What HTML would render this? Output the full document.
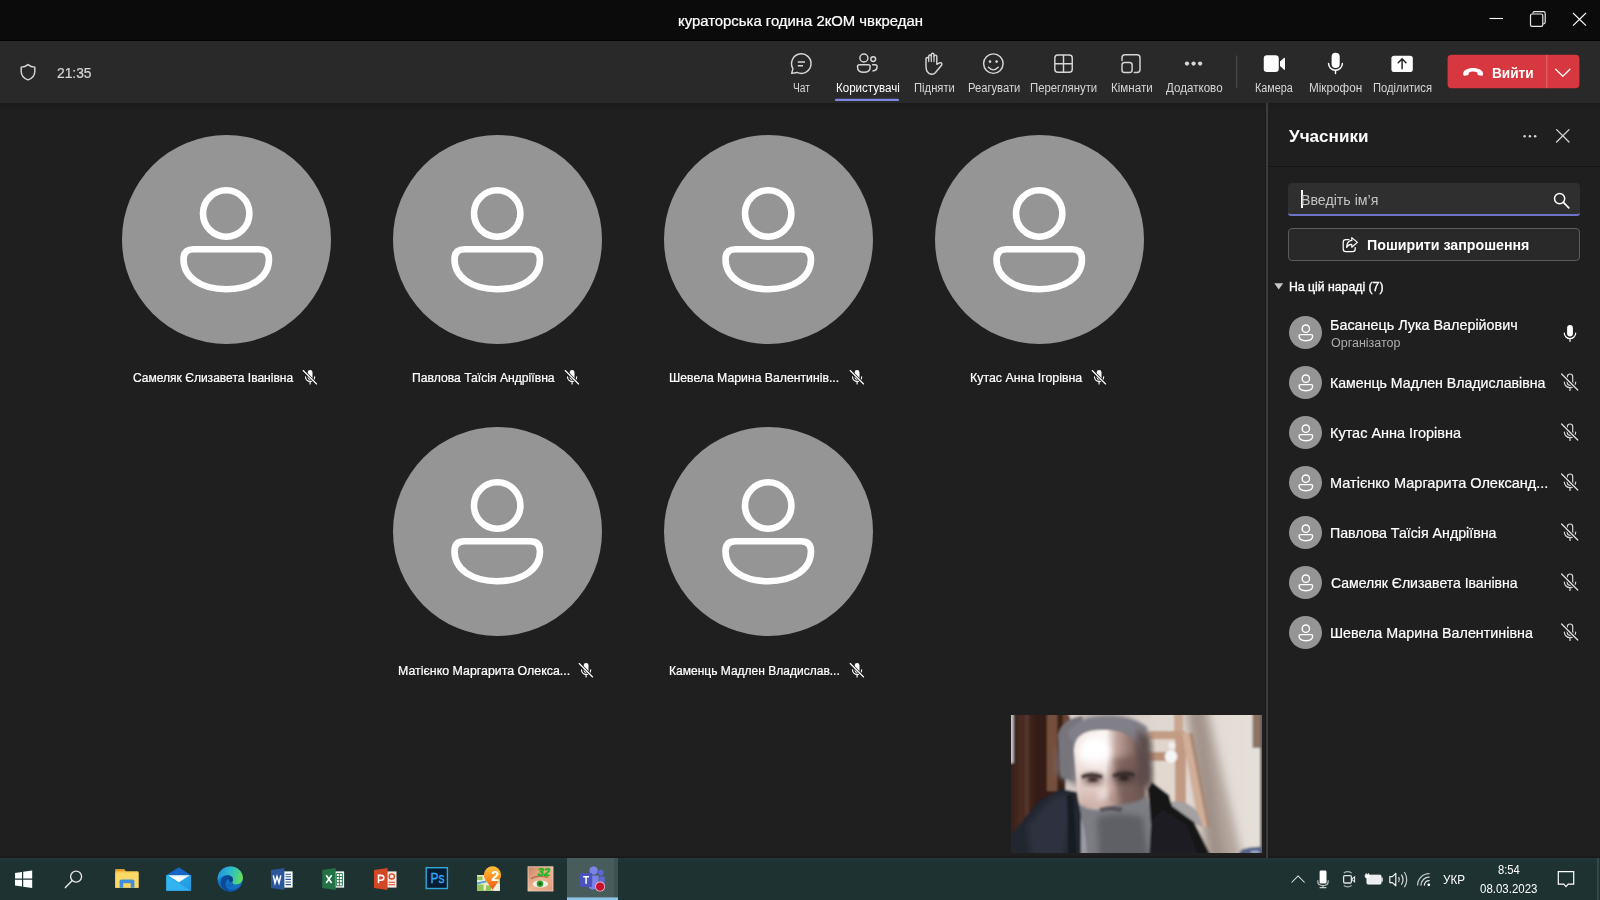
<!DOCTYPE html>
<html lang="uk">
<head>
<meta charset="utf-8">
<title>Teams</title>
<style>
html,body{margin:0;padding:0;}
html{width:1600px;height:900px;overflow:hidden;background:#1f1f1f;}
body{width:1600px;height:900px;overflow:hidden;position:relative;background:#1f1f1f;font-family:"Liberation Sans",sans-serif;color:#fff;}
.abs{position:absolute;}
.t{position:absolute;white-space:nowrap;transform-origin:0 0;}
svg{position:absolute;overflow:visible;}
#titlebar{left:0;top:0;width:1600px;height:41px;background:#0b0b0b;}
#toolbar{left:0;top:41px;width:1600px;height:62px;background:#292929;}
#main{left:0;top:103px;width:1266px;height:755px;background:#1f1f1f;}
#panel{left:1266px;top:103px;width:334px;height:755px;background:#1f1f1f;}
#taskbar{left:0;top:858px;width:1600px;height:42px;background:#1e3232;}
.av{position:absolute;width:209px;height:209px;border-radius:50%;background:#959595;}
.sav{position:absolute;width:33.8px;height:33.8px;border-radius:50%;background:#959595;}
</style>
</head>
<body>
<div class="abs" id="titlebar"></div>
<div class="abs" id="toolbar"></div>
<div class="abs" id="main"></div>
<div class="abs" id="panel"></div>
<div class="abs" style="left:1264.8px;top:103px;width:1px;height:755px;background:#191919"></div>
<div class="abs" style="left:1265.8px;top:103px;width:1.9px;height:755px;background:#3c3c3c"></div>
<div class="abs" id="taskbar"></div>
<div class="abs" style="left:0;top:40px;width:1600px;height:1px;background:#020202"></div>
<div class="abs" style="left:0;top:103px;width:1266px;height:7px;background:linear-gradient(#1a1a1a,#1f1f1f)"></div>
<div class="abs" style="left:1268px;top:103px;width:332px;height:5px;background:linear-gradient(#1b1b1b,#1f1f1f)"></div>
<div class="abs" style="left:0;top:855px;width:1264.8px;height:3px;background:linear-gradient(#1f1f1f,#181818)"></div>
<div class="abs" style="left:1267.7px;top:855px;width:333px;height:3px;background:linear-gradient(#1f1f1f,#181818)"></div>
<div class="abs" style="left:0;top:858px;width:1600px;height:5px;background:linear-gradient(#1e3739,#1e3232)"></div>
<svg width="0" height="0" style="left:0;top:0">
<defs>
<symbol id="person" viewBox="0 0 209 209">
  <circle cx="104.2" cy="78.5" r="23.2" fill="none" stroke="#fff" stroke-width="6.6"/>
  <path d="M71.5 114.3 H137 Q147 114.3 147 124.3 C147 142 130 154.2 104.2 154.2 C78.5 154.2 61.5 142 61.5 124.3 Q61.5 114.3 71.5 114.3 Z" fill="none" stroke="#fff" stroke-width="6.6" stroke-linejoin="round"/>
</symbol>
<symbol id="personS" viewBox="0 0 209 209">
  <circle cx="104.2" cy="78.5" r="22.6" fill="none" stroke="#fff" stroke-width="8.6"/>
  <path d="M71.5 115 H137 Q146.4 115 146.4 124.3 C146.4 142 130 153.4 104.2 153.4 C78.5 153.4 62 142 62 124.3 Q62 115 71.5 115 Z" fill="none" stroke="#fff" stroke-width="8.6" stroke-linejoin="round"/>
</symbol>
<symbol id="micoffF" viewBox="0 0 16 16">
  <rect x="5.7" y="1" width="4.8" height="10" rx="2.4" fill="#fff"/>
  <path d="M3.5 7.8 a4.6 4.6 0 0 0 9.2 0" fill="none" stroke="#fff" stroke-width="1.15" stroke-linecap="round"/>
  <path d="M8.1 12.6 V15" stroke="#fff" stroke-width="1.15" stroke-linecap="round"/>
  <path d="M1.2 1.5 L14.6 15" stroke="#1f1f1f" stroke-width="2.5"/>
  <path d="M1.2 1.5 L14.6 15" stroke="#fff" stroke-width="1.15" stroke-linecap="round"/>
</symbol>
<symbol id="micoffO" viewBox="0 0 20 20">
  <rect x="7.3" y="2" width="5.4" height="11.3" rx="2.7" fill="none" stroke="#d6d6d6" stroke-width="1.2"/>
  <path d="M4.3 10 a5.7 5.7 0 0 0 11.4 0" fill="none" stroke="#d6d6d6" stroke-width="1.2" stroke-linecap="round"/>
  <path d="M10 15.8 V18.4" stroke="#d6d6d6" stroke-width="1.2" stroke-linecap="round"/>
  <path d="M1.6 2 L17.8 18" stroke="#1f1f1f" stroke-width="3.2"/>
  <path d="M1.6 2 L17.8 18" stroke="#e6e6e6" stroke-width="1.2" stroke-linecap="round"/>
</symbol>
<symbol id="micF" viewBox="0 0 20 20">
  <rect x="7.1" y="2" width="5.8" height="11.4" rx="2.9" fill="#fff"/>
  <path d="M4.3 10 a5.7 5.7 0 0 0 11.4 0" fill="none" stroke="#fff" stroke-width="1.2" stroke-linecap="round"/>
  <path d="M10 15.8 V18.3" stroke="#fff" stroke-width="1.2" stroke-linecap="round"/>
</symbol>
</defs></svg>
<div class="av" style="left:122.0px;top:135.3px"></div><svg style="left:122.0px;top:135.3px" width="209" height="209"><use href="#person"/></svg>
<div class="av" style="left:393.0px;top:135.3px"></div><svg style="left:393.0px;top:135.3px" width="209" height="209"><use href="#person"/></svg>
<div class="av" style="left:664.0px;top:135.3px"></div><svg style="left:664.0px;top:135.3px" width="209" height="209"><use href="#person"/></svg>
<div class="av" style="left:935.0px;top:135.3px"></div><svg style="left:935.0px;top:135.3px" width="209" height="209"><use href="#person"/></svg>
<div class="av" style="left:393.0px;top:427.3px"></div><svg style="left:393.0px;top:427.3px" width="209" height="209"><use href="#person"/></svg>
<div class="av" style="left:664.0px;top:427.3px"></div><svg style="left:664.0px;top:427.3px" width="209" height="209"><use href="#person"/></svg>
<svg style="left:302.1px;top:368.8px" width="16" height="16"><use href="#micoffF"/></svg>
<svg style="left:564.1px;top:368.8px" width="16" height="16"><use href="#micoffF"/></svg>
<svg style="left:849.1px;top:368.8px" width="16" height="16"><use href="#micoffF"/></svg>
<svg style="left:1091.0px;top:368.8px" width="16" height="16"><use href="#micoffF"/></svg>
<svg style="left:578.3px;top:661.5px" width="16" height="16"><use href="#micoffF"/></svg>
<svg style="left:848.8px;top:661.5px" width="16" height="16"><use href="#micoffF"/></svg>
<div class="abs" style="left:1268px;top:166px;width:332px;height:1px;background:#141414"></div>
<svg style="left:1522px;top:128px" width="16" height="16"><circle cx="2.6" cy="8.2" r="1.25" fill="#d6d6d6"/><circle cx="7.9" cy="8.2" r="1.25" fill="#d6d6d6"/><circle cx="13.2" cy="8.2" r="1.25" fill="#d6d6d6"/></svg>
<svg style="left:1556px;top:129px" width="14" height="14"><path d="M0.6 0.6 L13 13 M13 0.6 L0.6 13" stroke="#d6d6d6" stroke-width="1.3" stroke-linecap="round"/></svg>
<div class="abs" style="left:1288px;top:183px;width:292px;height:33px;background:#2f2f2f;border-radius:4px 4px 3px 3px;box-sizing:border-box;border-bottom:2px solid #6f74c9;"></div>
<div class="abs" style="left:1300.6px;top:189.6px;width:2.2px;height:18.4px;background:#fff"></div>
<svg style="left:1553px;top:192px" width="17" height="17"><circle cx="6.6" cy="6.6" r="5.1" fill="none" stroke="#fff" stroke-width="1.5"/><path d="M10.4 10.4 L15.8 15.8" stroke="#fff" stroke-width="1.7" stroke-linecap="round"/></svg>
<div class="abs" style="left:1288px;top:228px;width:292px;height:33px;background:#292929;border:1px solid #5c5c5c;border-radius:4px;box-sizing:border-box;"></div>
<svg style="left:1341px;top:236px" width="18" height="18" viewBox="0 0 18 18"><path d="M8 3.6 H4.8 A2.6 2.6 0 0 0 2.2 6.2 V13 A2.6 2.6 0 0 0 4.8 15.6 H11.6 A2.6 2.6 0 0 0 14.2 13 V11.6" fill="none" stroke="#fff" stroke-width="1.25" stroke-linecap="round"/><path d="M10.8 1.6 L16.4 6.4 L10.8 11.2 V8.5 C8 8.4 6.6 9.6 5.6 11.4 C5.7 7.6 7.6 4.8 10.8 4.4 Z" fill="none" stroke="#fff" stroke-width="1.25" stroke-linejoin="round"/></svg>
<svg style="left:1273.5px;top:283px" width="10" height="7"><path d="M0.3 0.3 H9.2 L4.75 6.4 Z" fill="#c8c8c8"/></svg>
<div class="sav" style="left:1288.7px;top:315.7px"></div><svg style="left:1288.7px;top:315.7px" width="33.8" height="33.8"><use href="#personS"/></svg>
<svg style="left:1560.0px;top:322.5px" width="20" height="20"><use href="#micF"/></svg>
<div class="sav" style="left:1288.7px;top:365.7px"></div><svg style="left:1288.7px;top:365.7px" width="33.8" height="33.8"><use href="#personS"/></svg>
<svg style="left:1559.9px;top:372.4px" width="20" height="20"><use href="#micoffO"/></svg>
<div class="sav" style="left:1288.7px;top:415.7px"></div><svg style="left:1288.7px;top:415.7px" width="33.8" height="33.8"><use href="#personS"/></svg>
<svg style="left:1559.9px;top:422.4px" width="20" height="20"><use href="#micoffO"/></svg>
<div class="sav" style="left:1288.7px;top:465.7px"></div><svg style="left:1288.7px;top:465.7px" width="33.8" height="33.8"><use href="#personS"/></svg>
<svg style="left:1559.9px;top:472.4px" width="20" height="20"><use href="#micoffO"/></svg>
<div class="sav" style="left:1288.7px;top:515.7px"></div><svg style="left:1288.7px;top:515.7px" width="33.8" height="33.8"><use href="#personS"/></svg>
<svg style="left:1559.9px;top:522.4px" width="20" height="20"><use href="#micoffO"/></svg>
<div class="sav" style="left:1288.7px;top:565.7px"></div><svg style="left:1288.7px;top:565.7px" width="33.8" height="33.8"><use href="#personS"/></svg>
<svg style="left:1559.9px;top:572.4px" width="20" height="20"><use href="#micoffO"/></svg>
<div class="sav" style="left:1288.7px;top:615.7px"></div><svg style="left:1288.7px;top:615.7px" width="33.8" height="33.8"><use href="#personS"/></svg>
<svg style="left:1559.9px;top:622.4px" width="20" height="20"><use href="#micoffO"/></svg>
<!-- titlebar controls -->
<svg style="left:0;top:0" width="1600" height="41" viewBox="0 0 1600 41">
  <path d="M1489.5 18.5 H1503" stroke="#fff" stroke-width="1.1"/>
  <rect x="1530.5" y="14" width="12.3" height="12.3" rx="1.6" fill="none" stroke="#e8e8e8" stroke-width="1.2"/>
  <path d="M1533 13.6 V13 Q1533 11.6 1534.6 11.6 H1543.4 Q1545.2 11.6 1545.2 13.4 V22 Q1545.2 23.8 1543.6 23.8 H1543.2" fill="none" stroke="#e8e8e8" stroke-width="1.2"/>
  <path d="M1573 13 L1586 25.6 M1586 13 L1573 25.6" stroke="#fff" stroke-width="1.15"/>
</svg>
<!-- toolbar icons -->
<svg style="left:0;top:41px" width="1600" height="62" viewBox="0 41 1600 62">
  <g fill="none" stroke="#d6d6d6" stroke-width="1.45" stroke-linecap="round" stroke-linejoin="round">
    <!-- shield -->
    <path d="M28 64.6 C26 66.2 23.6 67 21.2 67.1 V71.2 C21.2 75.6 23.9 78.4 28 79.9 C32.1 78.4 34.8 75.6 34.8 71.2 V67.1 C32.4 67 30 66.2 28 64.6 Z"/>
    <!-- chat -->
    <path d="M792.9 68.55 A9.75 9.75 0 1 1 797.2 72.45 L791.7 73.4 Z"/>
    <path d="M797.8 61.95 H805 M797.8 65.7 H803" stroke-linecap="butt"/>
    <!-- people -->
    <circle cx="863.9" cy="58" r="4"/>
    <circle cx="873.2" cy="59.1" r="2.4"/>
    <path d="M859.5 64.7 H868.2 Q870.2 64.7 870.2 66.7 C870.2 70 867.8 72.3 863.85 72.3 C859.9 72.3 857.5 70 857.5 66.7 Q857.5 64.7 859.5 64.7 Z"/>
    <path d="M872.6 64.7 H875.2 Q877.1 64.7 877.1 66.6 C877.1 69.2 875.4 70.8 872.9 70.9"/>
    <!-- hand -->
    <path d="M926 66 V58.8 a1.35 1.35 0 0 1 2.7 0 V56.3 a1.3 1.3 0 0 1 2.6 0 V54.7 a1.35 1.35 0 0 1 2.7 0 V56.5 a1.4 1.4 0 0 1 2.8 0 V64.3 L940 62.7 Q942.4 62.5 941.7 65 L935.3 72.8 Q934 74.2 932.2 74.2 H931.2 Q926 73.6 926 66 Z"/>
    <path d="M928.7 58.8 V61.6 M931.3 56.3 V61.6 M934 56.5 V61.6" stroke-width="1.2"/>
    <!-- emoji -->
    <circle cx="993.35" cy="63.6" r="9.75"/>
    <path d="M988.5 67.3 Q993.35 72.4 998.2 67.3"/>
    <!-- grid -->
    <rect x="1054.85" y="55" width="17.4" height="17.3" rx="3"/>
    <path d="M1063.5 55 V72.3 M1054.85 63.65 H1072.25" stroke-linecap="butt"/>
    <!-- rooms -->
    <path d="M1122 60.4 V57.7 Q1122 54.7 1125 54.7 H1137 Q1140 54.7 1140 57.7 V69.5 Q1140 72.5 1137 72.5 H1134.3"/>
    <rect x="1122" y="62.5" width="10.1" height="10" rx="2.6"/>
  </g>
  <g fill="#d6d6d6">
    <circle cx="990" cy="61.6" r="1.3"/><circle cx="996.6" cy="61.6" r="1.3"/>
    <circle cx="1187" cy="63.6" r="2.15"/><circle cx="1193.6" cy="63.6" r="2.15"/><circle cx="1200.1" cy="63.6" r="2.15"/>
  </g>
  <!-- active underline -->
  <rect x="835" y="98.7" width="64" height="2.4" rx="1.2" fill="#7f86e0"/>
  <!-- separator -->
  <rect x="1236" y="55.5" width="1.2" height="32.5" fill="#4a4a4a"/>
  <!-- camera -->
  <rect x="1263.75" y="55.3" width="15" height="16.7" rx="3.2" fill="#fff"/>
  <path d="M1280 61.6 L1283.9 58 Q1285 57.2 1285 58.6 V69 Q1285 70.4 1283.9 69.6 L1280 66 Z" fill="#fff"/>
  <!-- mic -->
  <rect x="1331.6" y="52.7" width="8.1" height="15.3" rx="4.05" fill="#fff"/>
  <path d="M1328.55 63.4 a6.9 6.9 0 0 0 13.8 0" fill="none" stroke="#fff" stroke-width="1.45" stroke-linecap="round"/>
  <path d="M1335.5 70.4 V73.6" stroke="#fff" stroke-width="1.45" stroke-linecap="round"/>
  <!-- share -->
  <rect x="1391.4" y="55.7" width="21.4" height="16.3" rx="2.8" fill="#fff"/>
  <path d="M1402.1 59.4 V68.8 M1398.2 62.7 L1402.1 58.9 L1406 62.7" fill="none" stroke="#292929" stroke-width="1.5" stroke-linecap="round" stroke-linejoin="round"/>
  <!-- leave button -->
  <rect x="1447.6" y="54.8" width="131.8" height="33.4" rx="4" fill="#d7373f"/>
  <rect x="1546.3" y="54.8" width="1" height="33.4" fill="#e8696f"/>
  <path d="M1463.2 73.2 C1463.2 70.2 1468 67.9 1473.1 67.9 C1478.2 67.9 1483 70.2 1483 73.2 V74.6 Q1483 75.9 1481.7 75.7 L1478.6 75.2 Q1477.6 75 1477.5 74 L1477.3 72.4 C1476 71.8 1474.6 71.6 1473.1 71.6 C1471.6 71.6 1470.2 71.8 1468.9 72.4 L1468.7 74 Q1468.6 75 1467.6 75.2 L1464.5 75.7 Q1463.2 75.9 1463.2 74.6 Z" fill="#fff"/>
  <path d="M1555.7 69.2 L1562.8 76.3 L1569.9 69.2" fill="none" stroke="#fff" stroke-width="1.3" stroke-linecap="round" stroke-linejoin="round"/>
</svg>
<svg style="left:0;top:858px" width="1600" height="42" viewBox="0 858 1600 42">
  <defs>
    <linearGradient id="gEdgeB" x1="0.2" y1="0" x2="0.6" y2="1"><stop offset="0" stop-color="#2296dd"/><stop offset="1" stop-color="#0c56ab"/></linearGradient>
    <linearGradient id="gEdgeT" x1="0" y1="0.3" x2="1" y2="0.5"><stop offset="0" stop-color="#2592dc"/><stop offset="0.45" stop-color="#2bb9cf"/><stop offset="0.8" stop-color="#49d08a"/><stop offset="1" stop-color="#6fdd4f"/></linearGradient>
    <linearGradient id="gEdge" x1="0" y1="0" x2="1" y2="1"><stop offset="0" stop-color="#2bc3d2"/><stop offset="1" stop-color="#0b55a8"/></linearGradient>
    <linearGradient id="gEdge2" x1="0" y1="1" x2="1" y2="0"><stop offset="0" stop-color="#1a9be0"/><stop offset="0.55" stop-color="#2cc6c0"/><stop offset="1" stop-color="#6fdc4c"/></linearGradient>
    <linearGradient id="gPin" x1="0" y1="0" x2="0" y2="1"><stop offset="0" stop-color="#ffc23a"/><stop offset="0.55" stop-color="#fb8c1e"/><stop offset="1" stop-color="#f0501a"/></linearGradient>
    <linearGradient id="gMail" x1="0" y1="0" x2="1" y2="1"><stop offset="0" stop-color="#31b4f2"/><stop offset="1" stop-color="#1f93dd"/></linearGradient>
    <linearGradient id="gSkin" x1="0" y1="0" x2="1" y2="1"><stop offset="0" stop-color="#c98463"/><stop offset="0.5" stop-color="#eeb594"/><stop offset="1" stop-color="#e09a78"/></linearGradient>
  </defs>
  <!-- active app highlight -->
  <rect x="567" y="858" width="47" height="42" fill="#485c5c"/>
  <rect x="614" y="858" width="4" height="42" fill="#3d5252"/>
  <rect x="567" y="897.4" width="51" height="2.6" fill="#8cc4e6"/>
  <!-- start -->
  <g fill="#fff">
    <path d="M15 872.9 L22 871.9 V878.6 H15 Z"/>
    <path d="M23.2 871.7 L32.2 870.4 V878.6 H23.2 Z"/>
    <path d="M15 879.8 H22 V886.5 L15 885.5 Z"/>
    <path d="M23.2 879.8 H32.2 V888 L23.2 886.7 Z"/>
  </g>
  <!-- search -->
  <circle cx="76.1" cy="876.6" r="5.5" fill="none" stroke="#e4e4e4" stroke-width="1.35"/>
  <path d="M72 880.8 L65.4 887.6" stroke="#e4e4e4" stroke-width="1.5" stroke-linecap="round"/>
  <!-- explorer -->
  <path d="M115.3 870.2 Q115.3 869.3 116.2 869.3 H124 L125.8 871.3 H137.6 Q138.5 871.3 138.5 872.2 V887.8 H115.3 Z" fill="#f9c94e"/>
  <path d="M115.3 870.2 Q115.3 869.3 116.2 869.3 H124 L125.8 871.3 H115.3 Z" fill="#e39a2f"/>
  <rect x="115.3" y="872.6" width="23.2" height="15.2" fill="#fcd867"/>
  <path d="M119.6 887.8 V881.3 Q119.6 879.6 121.3 879.6 H132.7 Q134.4 879.6 134.4 881.3 V887.8 Z" fill="#3d8fdb"/>
  <rect x="123.2" y="883.2" width="7.5" height="4.6" fill="#fcd45c"/>
  <!-- mail -->
  <path d="M166.3 875.2 L178.7 867.2 L191.1 875.2 Z" fill="#1467c4"/>
  <rect x="166.3" y="875" width="24.8" height="15.8" fill="url(#gMail)"/>
  <path d="M166.3 876 L191.1 890.8 H166.3 Z" fill="#35b9f5" opacity="0.75"/>
  <path d="M168.6 875.4 H189.2 L178.9 882.2 Z" fill="#ffffff"/>
  <path d="M168.6 875.4 H189.2 L187.6 876.6 H170.2 Z" fill="#d6e6f2"/>
  <!-- edge -->
  <circle cx="230.2" cy="879.2" r="12.6" fill="url(#gEdgeB)"/>
  <path d="M218.2 875.2 C220.4 869.6 225.4 866.6 230.6 866.6 C238.4 866.6 242.9 872.6 242.9 877.6 C242.9 881.8 239.9 884.7 236 884.7 C233.2 884.7 231.9 883.4 232.5 881.8 C233.6 879.4 232.6 876.4 229.4 875.4 C225.4 874.2 220.6 875.6 217.8 880.2 C217.6 878.4 217.7 876.8 218.2 875.2 Z" fill="url(#gEdgeT)"/>
  <path d="M229.6 875.4 C225 874.4 220.6 877.6 220.6 882.6 C220.6 887.4 225 891.6 231 891.8 C227.4 890 225.2 886.8 225.6 883.2 C225.9 880.4 228 878.6 230.4 878.7 C232 878.8 232.9 880 232.5 881.6 C233.6 879.4 232.8 876.4 229.6 875.4 Z" fill="#0b4a99"/>
  <ellipse cx="230.9" cy="879.6" rx="2.1" ry="2.4" fill="#0a3f86"/>
  <path d="M232.5 881.8 C231.9 883.4 233.4 884.8 236 884.7 C238.6 884.6 240.6 883.4 241.8 881.6 C240.8 886.6 236.8 889.6 232 889.6 C228 889.4 225.8 886.8 225.6 883.6 C226.2 886.2 229 887.6 231.6 886.5 C233.6 885.6 233.5 883.6 232.5 881.8 Z" fill="#176fc3"/>
  <!-- word -->
  <rect x="283" y="871.4" width="9.6" height="16.2" fill="#fff"/>
  <path d="M285.5 874.2 H291 M285.5 876.8 H291 M285.5 879.4 H291 M285.5 882 H291 M285.5 884.6 H291" stroke="#2b579a" stroke-width="1.1"/>
  <path d="M271 869.9 L284.4 867.9 V890.1 L271 888.1 Z" fill="#2b579a"/>
  <path d="M273.3 875.4 L275 883 L277 876.6 L279 883 L280.8 875.4" fill="none" stroke="#fff" stroke-width="1.5" stroke-linejoin="miter"/>
  <!-- excel -->
  <rect x="334.5" y="871.4" width="9.6" height="16.2" fill="#fff"/>
  <path d="M336.4 873.4 H342.4 V885.8 H336.4 Z M336.4 876.5 H342.4 M336.4 879.6 H342.4 M336.4 882.7 H342.4 M339.4 873.4 V885.8" fill="none" stroke="#217346" stroke-width="0.9"/>
  <path d="M322.3 869.9 L335.7 867.9 V890.1 L322.3 888.1 Z" fill="#217346"/>
  <path d="M326.2 875.2 L331.6 883 M331.6 875.2 L326.2 883" stroke="#fff" stroke-width="1.6"/>
  <!-- powerpoint -->
  <rect x="386.5" y="871.4" width="10" height="16.2" fill="#fbe9e4"/>
  <circle cx="391.8" cy="876.4" r="2.6" fill="none" stroke="#d24726" stroke-width="1.3"/>
  <path d="M388.6 882.2 H395 M388.6 884.8 H395" stroke="#d24726" stroke-width="1.1"/>
  <path d="M374 869.9 L387.6 867.9 V890.1 L374 888.1 Z" fill="#d24726"/>
  <path d="M378.5 883.2 V875.4 H381.2 Q383.8 875.4 383.8 877.8 Q383.8 880.2 381.2 880.2 H378.5" fill="none" stroke="#fff" stroke-width="1.6"/>
  <!-- photoshop -->
  <rect x="426.2" y="867.7" width="21.2" height="20.8" fill="#071c30" stroke="#2fa8dc" stroke-width="1.4"/>
  <text x="430.4" y="883.2" font-family="Liberation Sans, sans-serif" font-size="14.5" font-weight="400" fill="#31a8ff" stroke="#31a8ff" stroke-width="0.35" textLength="14" lengthAdjust="spacingAndGlyphs">Ps</text>
  <!-- 2gis -->
  <rect x="477" y="875" width="22.8" height="15.8" fill="#ece8cf"/>
  <path d="M477 876.5 H482.5 V880 H477 Z M477 884.5 H483.5 V890.8 H477 Z M486 885.4 H491 V890.8 H486 Z" fill="#8fc654"/>
  <path d="M477 882.6 L486.5 880.6 V882.2 L477 884.2 Z" fill="#3da0d8"/>
  <path d="M494 884 H499.8 V890.8 H494 Z" fill="#f2efe0"/>
  <path d="M492.5 889.8 L485.4 879.8 A8.6 8.6 0 1 1 499.6 879.8 Z" fill="url(#gPin)"/>
  <text x="491.2" y="880.6" font-family="Liberation Sans, sans-serif" font-size="14.5" font-weight="700" fill="#fff">2</text>
  <!-- eye app -->
  <rect x="528" y="866.8" width="25" height="24.2" fill="url(#gSkin)"/>
  <rect x="528" y="866.8" width="25" height="24.2" fill="none" stroke="#f3d3c0" stroke-width="0.8"/>
  <path d="M531 878.6 Q538 874.6 548 877.6" stroke="#9a5a40" stroke-width="1.6" fill="none" opacity="0.7"/>
  <ellipse cx="540.5" cy="884" rx="7.6" ry="3.4" fill="#f4efe6"/>
  <circle cx="540" cy="883.8" r="3.3" fill="#2f9e2b"/>
  <circle cx="540" cy="883.8" r="1.3" fill="#145c14"/>
  <text x="537.6" y="876.4" font-family="Liberation Sans, sans-serif" font-size="11" font-weight="700" font-style="italic" fill="#1fb51f" stroke="#1fb51f" stroke-width="0.6">32</text>
  <!-- teams -->
  <circle cx="593.6" cy="870.6" r="4.1" fill="#7b83eb"/>
  <circle cx="600.8" cy="872.6" r="2.8" fill="#5f67d6"/>
  <path d="M588 875.6 H598.6 V884 Q598.6 889.6 593.3 889.6 Q588 889.6 588 884 Z" fill="#7b83eb"/>
  <path d="M599.2 876.4 H604.6 V883 Q604.6 887 601 887 Q599.8 887 599.2 886.4 Z" fill="#5f67d6"/>
  <rect x="580" y="873" width="12.2" height="14" rx="1.2" fill="#4b53bc"/>
  <path d="M583.2 876.8 H589 M586.1 876.8 V883.8" stroke="#fff" stroke-width="1.5"/>
  <circle cx="600.1" cy="886.6" r="5" fill="#e7b9c3"/>
  <circle cx="600.1" cy="886.6" r="4.2" fill="#c8102e"/>
  <!-- tray -->
  <path d="M1291.6 882.5 L1298.1 875.9 L1304.6 882.5" fill="none" stroke="#e6e9e9" stroke-width="1.05"/>
  <rect x="1319.6" y="870.6" width="6.9" height="13" rx="1.4" fill="#fff"/>
  <path d="M1317.8 880.2 V881.6 Q1317.8 885.6 1323 885.6 Q1328.2 885.6 1328.2 881.6 V880.2" fill="none" stroke="#b4bcbc" stroke-width="1.2"/>
  <path d="M1323 885.6 V887.6 M1319.6 887.7 H1326.4" stroke="#c4caca" stroke-width="1.2"/>
  <rect x="1343.6" y="875.6" width="7.8" height="7.4" rx="1.2" fill="none" stroke="#e0e4e4" stroke-width="1.3"/>
  <path d="M1351.6 879.3 L1354.6 876.9 V881.9 Z" fill="none" stroke="#e0e4e4" stroke-width="1.1"/>
  <path d="M1343.8 873 Q1347.6 870.4 1351.6 873 M1343.8 885.6 Q1347.6 888.2 1351.6 885.6" fill="none" stroke="#aab4b4" stroke-width="1.2"/>
  <rect x="1367" y="875.2" width="14" height="8.8" rx="0.8" fill="#e9eded" stroke="#fff" stroke-width="1"/>
  <rect x="1381.4" y="877.6" width="1.3" height="4" fill="#fff"/>
  <path d="M1366.2 873 V874.6 M1368.4 873 V874.6 M1365.2 874.8 H1369.4 V876.4 Q1369.4 878 1367.3 878 Q1365.2 878 1365.2 876.4 Z" fill="#fff" stroke="#fff" stroke-width="0.8"/>
  <path d="M1389.8 876.6 H1392.4 L1395.8 873.4 V885.8 L1392.4 882.6 H1389.8 Z" fill="none" stroke="#f0f0f0" stroke-width="1.2" stroke-linejoin="round"/>
  <path d="M1398.6 877.2 Q1400.2 879.6 1398.6 882" fill="none" stroke="#f0f0f0" stroke-width="1.2"/>
  <path d="M1401.4 874.6 Q1404.6 879.6 1401.4 884.6" fill="none" stroke="#d8dcdc" stroke-width="1.2"/>
  <path d="M1404.4 872 Q1409 879.6 1404.4 887.2" fill="none" stroke="#c4caca" stroke-width="1.2"/>
  <circle cx="1428.8" cy="884.8" r="1.35" fill="#fff"/>
  <path d="M1424.4 885.6 A4.6 4.6 0 0 1 1429.6 880.6" fill="none" stroke="#e6eaea" stroke-width="1.25"/>
  <path d="M1421 885.6 A8 8 0 0 1 1429.6 877.2" fill="none" stroke="#d0d6d6" stroke-width="1.25"/>
  <path d="M1417.6 885.6 A11.6 11.6 0 0 1 1429.6 873.7" fill="none" stroke="#bcc4c4" stroke-width="1.25"/>
  <!-- notification -->
  <path d="M1558.3 871.7 H1573.7 V884.2 H1568.2 L1566 886.6 L1563.8 884.2 H1558.3 Z" fill="none" stroke="#fff" stroke-width="1.2"/>
  <rect x="1597.4" y="858" width="1" height="42" fill="#4a5c5c"/>
</svg>
<div class="abs" style="left:1011px;top:715px;width:250.5px;height:138.3px;overflow:hidden;background:#d9d0c8;">
<svg style="left:-8px;top:-8px" width="267" height="155" viewBox="-8 -8 267 155">
  <defs>
    <filter id="b1" x="-10%" y="-10%" width="120%" height="120%"><feGaussianBlur stdDeviation="1.3"/></filter>
    <filter id="b2" x="-20%" y="-20%" width="140%" height="140%"><feGaussianBlur stdDeviation="3"/></filter>
    <filter id="b3" x="-30%" y="-30%" width="160%" height="160%"><feGaussianBlur stdDeviation="5"/></filter>
    <linearGradient id="wall" x1="0" y1="0" x2="1" y2="0"><stop offset="0" stop-color="#d5cbc3"/><stop offset="0.7" stop-color="#e1dad3"/><stop offset="1" stop-color="#e6e1db"/></linearGradient>
    <linearGradient id="curt" x1="0" y1="0" x2="1" y2="0"><stop offset="0" stop-color="#2a1812"/><stop offset="0.3" stop-color="#4a2c22"/><stop offset="0.55" stop-color="#331d16"/><stop offset="1" stop-color="#3c231a"/></linearGradient>
    <linearGradient id="face" x1="0" y1="0" x2="1" y2="0"><stop offset="0" stop-color="#efe6e2"/><stop offset="0.45" stop-color="#fbf6f4"/><stop offset="0.6" stop-color="#bfa39b"/><stop offset="0.8" stop-color="#8f746d"/><stop offset="1" stop-color="#5e4a46"/></linearGradient>
  </defs>
  <g filter="url(#b1)">
    <rect x="-8" y="-8" width="267" height="155" fill="url(#wall)"/>
    <!-- wall shadow band -->
    <path d="M174 -8 L196 -8 L232 147 L196 147 Z" fill="#b3a59c" filter="url(#b3)"/>
    <path d="M180 -8 L190 -8 L214 147 L200 147 Z" fill="#9d8e86" filter="url(#b3)"/>
    <!-- right top frame -->
    <rect x="241.5" y="-8" width="10" height="41" fill="#8d7465"/>
    <rect x="249" y="-8" width="4" height="155" fill="#6b625c"/>
    <!-- wooden structure -->
    <rect x="163" y="-8" width="9" height="26" fill="#c9a891"/>
    <rect x="130" y="16" width="44" height="8.5" fill="#c39c84"/>
    <rect x="134" y="24.5" width="30" height="12" fill="#e0d5cc"/>
    <rect x="132" y="37" width="36" height="9" fill="#b98f78"/>
    <rect x="140" y="46" width="24" height="40" fill="#e2d8cf"/>
    <rect x="164" y="20" width="11" height="72" fill="#c29a83"/>
    <path d="M171 18 L180 18 L198 112 L188 112 Z" fill="#d1ae98"/>
    <path d="M178 18 L182 18 L200 112 L196 112 Z" fill="#a88a7a"/>
    <!-- bulb -->
    <circle cx="161" cy="30.5" r="3.6" fill="#f1efee"/>
    <circle cx="160" cy="41.5" r="6.2" fill="#f7f6f6"/>
    <!-- curtain left -->
    <rect x="-8" y="-8" width="62" height="155" fill="url(#curt)"/>
    <rect x="-8" y="-8" width="10.5" height="56" fill="#c9c9cb"/>
    <rect x="14" y="-8" width="4" height="120" fill="#5a3a2d" opacity="0.8"/>
    <rect x="36" y="-8" width="10.5" height="84" fill="#74503d"/>
    <rect x="46.5" y="-8" width="8" height="84" fill="#3a2119"/>
    <path d="M50 -8 H62 L58 8 L52 20 V-8Z" fill="#6a4636"/>
    <!-- wall top strip -->
    <path d="M52 -8 H140 V4 Q100 -2 62 6 Z" fill="#d9d0ca"/>
    <!-- cushion -->
    <path d="M158 88 Q172 82 186 96 L192 112 L160 100 Z" fill="#a3a1a1"/>
    <!-- hair -->
    <path d="M47 60 C44 30 56 4 84 1 C108 -2 126 4 134 16 L140 60 L130 70 L64 70 Z" fill="#7b7980" filter="url(#b2)"/>
    <path d="M47 20 C50 8 60 2 72 1 L66 30 L62 66 L50 62 Z" fill="#77757c"/>
    <path d="M56 18 C66 0 112 -6 136 12 L137 30 C120 12 86 10 64 30 Z" fill="#817f87" filter="url(#b1)"/>
    <!-- face -->
    <path d="M63 36 C63 19 76 14 96 15 C116 16 128 24 131 42 L134 92 L68 96 Z" fill="url(#face)"/>
    <ellipse cx="83" cy="37" rx="15" ry="15" fill="#ffffff" filter="url(#b2)"/>
    <!-- face shadow right -->
    <path d="M102 44 L132 38 L140 72 L132 96 L102 92 Z" fill="#6f5852" opacity="0.8" filter="url(#b2)"/>
    <path d="M126 14 L140 24 L141 70 L128 72 Z" fill="#5b4b49" filter="url(#b2)"/>
    <linearGradient id="skinv" x1="0" y1="0" x2="0" y2="1"><stop offset="0" stop-color="#d9b9ae" stop-opacity="0"/><stop offset="0.55" stop-color="#d4b2a8" stop-opacity="0.55"/><stop offset="1" stop-color="#b8968c" stop-opacity="0.8"/></linearGradient>
    <path d="M64 40 H106 V96 H66 Z" fill="url(#skinv)" filter="url(#b2)"/>
    <ellipse cx="82" cy="64" rx="11" ry="6" fill="#6a5350" opacity="0.75" filter="url(#b2)"/>
    <ellipse cx="113" cy="62" rx="12" ry="6.5" fill="#4a3a3a" opacity="0.8" filter="url(#b2)"/>
    <!-- brows / eyes -->
    <path d="M70 60 Q80 55 92 60 L91 64 Q80 60 71 64 Z" fill="#4a3a38"/>
    <ellipse cx="82" cy="64.5" rx="5" ry="2.6" fill="#3a2c2c" filter="url(#b1)"/>
    <path d="M101 59 Q113 54 124 58 L123 62 Q112 59 102 63 Z" fill="#3c2e2e"/>
    <ellipse cx="113" cy="63" rx="5" ry="2.6" fill="#2f2424" filter="url(#b1)"/>
    <path d="M97 50 L101 50 L103 82 L97 84 Z" fill="#b59c94" opacity="0.55" filter="url(#b2)"/>
    <ellipse cx="100" cy="84" rx="9" ry="5" fill="#a88a82" opacity="0.6" filter="url(#b2)"/>
    <ellipse cx="92" cy="80" rx="5" ry="6" fill="#f3e8e4" opacity="0.8" filter="url(#b2)"/>
    <!-- beard -->
    <path d="M64 86 C70 92 84 98 98 92 C110 88 126 90 136 80 L142 104 L140 147 L68 147 L66 110 Z" fill="#7d7d84" filter="url(#b1)"/>
    <path d="M66 96 C72 104 76 120 76 147 L66 147 Z" fill="#9a9aa0"/>
    <path d="M86 102 C98 98 118 98 132 102 L138 147 L88 147 Z" fill="#5e5e66" filter="url(#b2)"/>
    <path d="M88 93 Q99 89 112 93 L110 97 Q99 94 90 97 Z" fill="#4e4a50" opacity="0.8"/>
    <!-- clothing left -->
    <path d="M-8 130 L10 108 L28 86 L50 74 L66 77 L70 100 L70 147 L-8 147 Z" fill="#22262f"/>
    <path d="M16 110 L40 84 L58 78 L60 100 L52 147 L20 147 Z" fill="#2d3340" filter="url(#b2)"/>
    <path d="M56 80 L62 80 L66 147 L58 147 Z" fill="#181b22"/>
    <!-- clothing right -->
    <path d="M137 74 L141 67 L158 80 L161 91 L183 107 L203 147 L138 147 L140 110 Z" fill="#121317"/>
    <path d="M142 104 L152 94 L176 110 L190 147 L140 147 Z" fill="#1a1b20"/>
    <!-- blue item bottom right -->
    <path d="M224 147 L230 135 Q240 131 254 132 V147 Z" fill="#56658a"/>
    <rect x="240" y="136" width="8" height="2.4" fill="#aab6d4"/>
  </g>
</svg>
</div>
<div class="t" style="left:677.50px;top:12.45px;font-size:14px;line-height:18px;color:#ffffff;transform:scaleX(1.0626);-webkit-text-stroke:0.22px #ffffff;">кураторська година 2кОМ чвкредан</div>
<div class="t" style="left:56.80px;top:63.30px;font-size:15px;line-height:20px;color:#d6d6d6;transform:scaleX(0.9195);-webkit-text-stroke:0.22px #d6d6d6;">21:35</div>
<div class="t" style="left:792.50px;top:79.84px;font-size:12px;line-height:16px;color:#d6d6d6;transform:scaleX(0.8575);">Чат</div>
<div class="t" style="left:835.60px;top:79.84px;font-size:12px;line-height:16px;color:#ffffff;transform:scaleX(0.9630);">Користувачі</div>
<div class="t" style="left:913.50px;top:79.84px;font-size:12px;line-height:16px;color:#d6d6d6;transform:scaleX(0.9379);">Підняти</div>
<div class="t" style="left:967.90px;top:79.84px;font-size:12px;line-height:16px;color:#d6d6d6;transform:scaleX(0.9323);">Реагувати</div>
<div class="t" style="left:1030.00px;top:79.84px;font-size:12px;line-height:16px;color:#d6d6d6;transform:scaleX(0.9448);">Переглянути</div>
<div class="t" style="left:1110.50px;top:79.84px;font-size:12px;line-height:16px;color:#d6d6d6;transform:scaleX(0.9684);">Кімнати</div>
<div class="t" style="left:1165.60px;top:79.84px;font-size:12px;line-height:16px;color:#d6d6d6;transform:scaleX(0.9664);">Додатково</div>
<div class="t" style="left:1255.00px;top:79.84px;font-size:12px;line-height:16px;color:#d6d6d6;transform:scaleX(0.8992);">Камера</div>
<div class="t" style="left:1309.40px;top:79.84px;font-size:12px;line-height:16px;color:#d6d6d6;transform:scaleX(0.9757);">Мікрофон</div>
<div class="t" style="left:1372.75px;top:79.84px;font-size:12px;line-height:16px;color:#d6d6d6;transform:scaleX(0.9344);">Поділитися</div>
<div class="t" style="left:1492.00px;top:63.95px;font-size:14px;line-height:18px;color:#ffffff;transform:scaleX(0.9720);font-weight:700;">Вийти</div>
<div class="t" style="left:132.70px;top:370.04px;font-size:12.3px;line-height:16px;color:#ffffff;transform:scaleX(0.9786);-webkit-text-stroke:0.22px #ffffff;">Самеляк Єлизавета Іванівна</div>
<div class="t" style="left:412.21px;top:370.04px;font-size:12.3px;line-height:16px;color:#ffffff;transform:scaleX(0.9890);-webkit-text-stroke:0.22px #ffffff;">Павлова Таїсія Андріївна</div>
<div class="t" style="left:669.41px;top:370.04px;font-size:12.3px;line-height:16px;color:#ffffff;transform:scaleX(0.9948);-webkit-text-stroke:0.22px #ffffff;">Шевела Марина Валентинів...</div>
<div class="t" style="left:969.69px;top:370.04px;font-size:12.3px;line-height:16px;color:#ffffff;transform:scaleX(1.0071);-webkit-text-stroke:0.22px #ffffff;">Кутас Анна Ігорівна</div>
<div class="t" style="left:398.39px;top:662.74px;font-size:12.3px;line-height:16px;color:#ffffff;transform:scaleX(1.0071);-webkit-text-stroke:0.22px #ffffff;">Матієнко Маргарита Олекса...</div>
<div class="t" style="left:669.42px;top:662.74px;font-size:12.3px;line-height:16px;color:#ffffff;transform:scaleX(0.9772);-webkit-text-stroke:0.22px #ffffff;">Каменць Мадлен Владислав...</div>
<div class="t" style="left:1288.50px;top:125.61px;font-size:17px;line-height:22px;color:#ffffff;transform:scaleX(1.0053);font-weight:700;">Учасники</div>
<div class="t" style="left:1300.55px;top:189.80px;font-size:15px;line-height:20px;color:#c4c4c4;transform:scaleX(0.9463);">Введіть ім’я</div>
<div class="t" style="left:1366.60px;top:235.95px;font-size:14px;line-height:18px;color:#ffffff;transform:scaleX(1.0145);font-weight:700;">Поширити запрошення</div>
<div class="t" style="left:1288.50px;top:279.24px;font-size:12px;line-height:16px;color:#ffffff;transform:scaleX(1.0208);-webkit-text-stroke:0.35px #ffffff;">На цій нараді (7)</div>
<div class="t" style="left:1330.24px;top:315.10px;font-size:15px;line-height:20px;color:#ffffff;transform:scaleX(0.9571);-webkit-text-stroke:0.22px #ffffff;">Басанець Лука Валерійович</div>
<div class="t" style="left:1331.20px;top:335.47px;font-size:12.5px;line-height:16px;color:#adadad;transform:scaleX(0.9995);">Організатор</div>
<div class="t" style="left:1330.26px;top:372.80px;font-size:15px;line-height:20px;color:#ffffff;transform:scaleX(0.9423);-webkit-text-stroke:0.22px #ffffff;">Каменць Мадлен Владиславівна</div>
<div class="t" style="left:1330.24px;top:422.80px;font-size:15px;line-height:20px;color:#ffffff;transform:scaleX(0.9638);-webkit-text-stroke:0.22px #ffffff;">Кутас Анна Ігорівна</div>
<div class="t" style="left:1330.23px;top:472.80px;font-size:15px;line-height:20px;color:#ffffff;transform:scaleX(0.9684);-webkit-text-stroke:0.22px #ffffff;">Матієнко Маргарита Олександ...</div>
<div class="t" style="left:1330.25px;top:522.80px;font-size:15px;line-height:20px;color:#ffffff;transform:scaleX(0.9460);-webkit-text-stroke:0.22px #ffffff;">Павлова Таїсія Андріївна</div>
<div class="t" style="left:1331.20px;top:572.80px;font-size:15px;line-height:20px;color:#ffffff;transform:scaleX(0.9342);-webkit-text-stroke:0.22px #ffffff;">Самеляк Єлизавета Іванівна</div>
<div class="t" style="left:1330.25px;top:622.80px;font-size:15px;line-height:20px;color:#ffffff;transform:scaleX(0.9536);-webkit-text-stroke:0.22px #ffffff;">Шевела Марина Валентинівна</div>
<div class="t" style="left:1442.90px;top:872.14px;font-size:12px;line-height:16px;color:#ffffff;transform:scaleX(0.9729);">УКР</div>
<div class="t" style="left:1497.90px;top:862.04px;font-size:12px;line-height:16px;color:#ffffff;transform:scaleX(0.9332);">8:54</div>
<div class="t" style="left:1480.40px;top:881.04px;font-size:12px;line-height:16px;color:#ffffff;transform:scaleX(0.9555);">08.03.2023</div>
</body>
</html>
